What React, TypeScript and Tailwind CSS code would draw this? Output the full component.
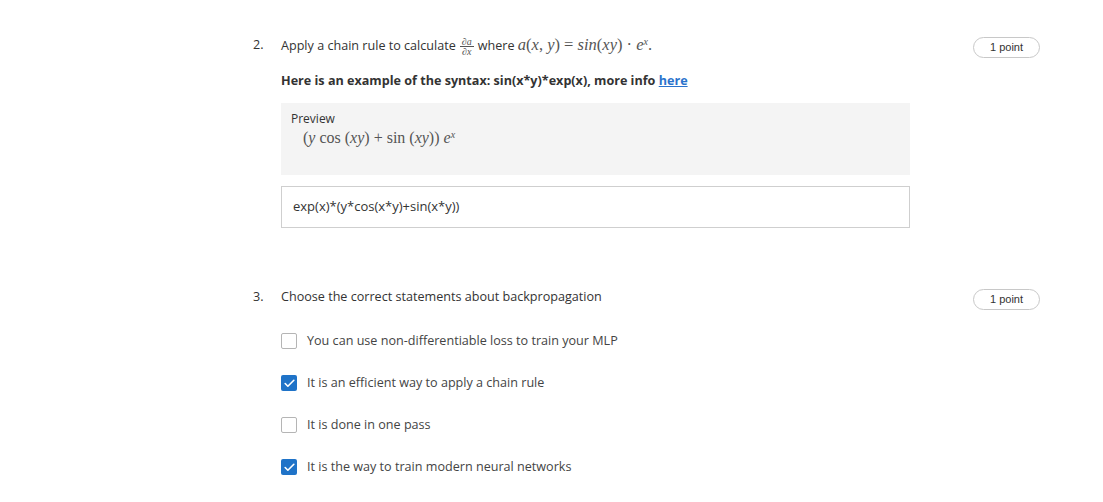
import { Check } from 'lucide-react';

const sans = { fontFamily: '"Open Sans", Arial, sans-serif' };
const serif = { fontFamily: '"Liberation Serif", "DejaVu Serif", serif' };

const PointBadge = () => (
  <div
    className="mt-[2px] h-[21px] w-[67px] shrink-0 rounded-full border border-[#c8c8c8] text-center text-[11px] leading-[19px] text-[#333]"
    style={{ fontFamily: '"Liberation Sans", Arial, sans-serif' }}
  >
    1 point
  </div>
);

const Checkbox = ({ checked }: { checked: boolean }) =>
  checked ? (
    <span className="flex h-[16px] w-[16px] items-center justify-center rounded-[2px] bg-[#1f73c8]">
      <Check size={13} strokeWidth={3} className="text-white" />
    </span>
  ) : (
    <span className="h-[16px] w-[16px] rounded-[2px] border border-[#b5b5b5] bg-white" />
  );

const Fraction = () => (
  <span className="mx-[4px] inline-flex flex-col items-center align-middle text-[10px] leading-[9px] text-[#555]" style={serif}>
    <span className="italic">∂a</span>
    <span className="h-px w-[14px] bg-[#555]" />
    <span className="italic">∂x</span>
  </span>
);

const options = [
  { text: 'You can use non-differentiable loss to train your MLP', checked: false },
  { text: 'It is an efficient way to apply a chain rule', checked: true },
  { text: 'It is done in one pass', checked: false },
  { text: 'It is the way to train modern neural networks', checked: true },
];

export default function App() {
  return (
    <div className="min-h-[502px] bg-white pl-[253px] pr-[63px] pt-[35px] text-[12.6px] text-[#333]" style={sans}>
      {/* question 2 */}
      <div className="flex items-start">
        <div className="w-[28px] shrink-0 leading-[20px]">2.</div>
        <div className="flex-1">
          <div className="h-[20px] leading-[20px] whitespace-nowrap">
            Apply a chain rule to calculate
            <Fraction />
            where{' '}
            <span className="text-[16.5px] text-[#555]" style={serif}>
              <i>a</i>(<i>x</i>, <i>y</i>) = <i>sin</i>(<i>xy</i>) · <i>e</i>
              <sup className="text-[10px]"><i>x</i></sup>.
            </span>
          </div>
          <div className="mt-[16px] font-bold leading-[20px]">
            Here is an example of the syntax: sin(x*y)*exp(x), more info{' '}
            <a href="#" className="text-[#2a73cc] underline">here</a>
          </div>
          <div className="mr-[63px] mt-[12px] h-[72px] bg-[#f4f4f4] pl-[10px] pt-[8px]">
            <div className="text-[12px] leading-[16px] text-[#333]">Preview</div>
            <div className="pl-[12px] text-[16px] leading-[22px] text-[#555]" style={serif}>
              (<i>y</i> cos (<i>xy</i>) + sin (<i>xy</i>)) <i>e</i>
              <sup className="text-[10px]"><i>x</i></sup>
            </div>
          </div>
          <div className="mr-[63px] mt-[11px] flex h-[42px] items-center border border-[#cfcfcf] pl-[11px] text-[13px] text-[#333]">
            exp(x)*(y*cos(x*y)+sin(x*y))
          </div>
        </div>
        <PointBadge />
      </div>

      {/* question 3 */}
      <div className="mt-[59px] flex items-start">
        <div className="w-[28px] shrink-0 leading-[20px]">3.</div>
        <div className="flex-1">
          <div className="leading-[20px]">Choose the correct statements about backpropagation</div>
          <div className="mt-[24px] flex flex-col gap-[22px]">
            {options.map((o) => (
              <label key={o.text} className="flex h-[20px] items-center gap-[10px] text-[#444]">
                <Checkbox checked={o.checked} />
                <span>{o.text}</span>
              </label>
            ))}
          </div>
        </div>
        <PointBadge />
      </div>
    </div>
  );
}
